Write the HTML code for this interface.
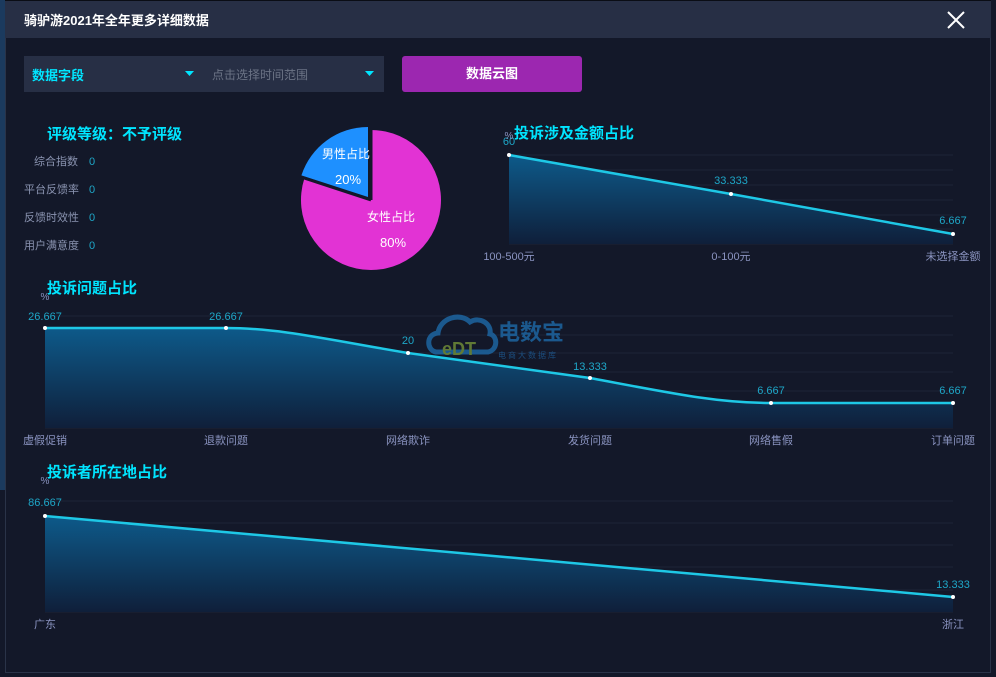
<!DOCTYPE html>
<html><head><meta charset="utf-8"><style>
html,body{margin:0;padding:0;width:996px;height:677px;overflow:hidden;background:#131829;font-family:"Liberation Sans","Noto Sans CJK SC",sans-serif}
.t{position:absolute;white-space:nowrap}
</style></head><body>
<div style="position:absolute;left:0;top:0;width:5px;height:490px;background:#1b3a5e"></div>
<div style="position:absolute;left:5px;top:0;width:986px;height:673px;border:1px solid #2a3348;box-sizing:border-box;background:#131829"></div>
<div style="position:absolute;left:5px;top:0;width:986px;height:38px;background:#272f45;border-top:1px solid #0a0d15;box-sizing:border-box"></div>
<div class="t" style="left:24px;top:10px;color:#fff;font-size:13px;font-weight:bold">骑驴游2021年全年更多详细数据</div>
<svg style="position:absolute;left:946px;top:10px" width="20" height="20"><path d="M2 2L18 18M18 2L2 18" stroke="#fff" stroke-width="2"/></svg>
<div style="position:absolute;left:24px;top:56px;width:360px;height:36px;background:#272f45"></div>
<div class="t" style="left:32px;top:65px;color:#00e5ff;font-size:13px;font-weight:bold">数据字段</div>
<div class="t" style="left:212px;top:66px;color:#6b7385;font-size:12px">点击选择时间范围</div>
<svg style="position:absolute;left:185px;top:71px" width="200" height="6"><path d="M0 0h9l-4.5 5z M180 0h9l-4.5 5z" fill="#00e5ff"/></svg>
<div style="position:absolute;left:402px;top:56px;width:180px;height:36px;background:#9c27b0;border-radius:3px;color:#fff;font-size:13px;font-weight:bold;text-align:center;line-height:36px">数据云图</div>
<div class="t" style="left:47px;top:123px;color:#00e5ff;font-size:15px;font-weight:bold">评级等级：不予评级</div>
<div class="t" style="left:24px;top:148px;font-size:11px;color:#8a93b0;line-height:28px;text-align:right;width:54px">综合指数<br>平台反馈率<br>反馈时效性<br>用户满意度</div>
<div class="t" style="left:89px;top:148px;font-size:11px;color:#1ea7c8;line-height:28px">0<br>0<br>0<br>0</div>
<svg style="position:absolute;left:0;top:0" width="996" height="677">
<defs><linearGradient id="g" x1="0" y1="0" x2="0" y2="1"><stop offset="0" stop-color="#0d5a8a"/><stop offset="1" stop-color="#0f1f3a"/></linearGradient></defs>
<path d="M371 200L371 130A70 70 0 1 1 304.4 178.4Z" fill="#e233d4"/>
<path d="M368 197L301.4 175.4A70 70 0 0 1 368 127Z" fill="#1e90ff"/>
<path d="M371 200L371 130M371 200L304 178" stroke="#131829" stroke-width="3"/>
<text x="346" y="158" fill="#fff" font-size="12" text-anchor="middle">男性占比</text>
<text x="348" y="184" fill="#fff" font-size="13" text-anchor="middle">20%</text>
<text x="391" y="221" fill="#fff" font-size="12" text-anchor="middle">女性占比</text>
<text x="393" y="247" fill="#fff" font-size="13" text-anchor="middle">80%</text>
<g stroke="#1c2438" stroke-width="1">
<path d="M509 155H953M509 170H953M509 185H953M509 200H953M509 215H953M509 229H953M509 244H953"/>
<path d="M45 316H953M45 335H953M45 353H953M45 372H953M45 391H953M45 409H953M45 428H953"/>
<path d="M45 501H953M45 523H953M45 545H953M45 567H953M45 590H953M45 612H953"/>
</g>
<path d="M509 155L731 194L953 234V244H509Z" fill="url(#g)"/>
<path d="M509 155L731 194L953 234" stroke="#1ec8e6" stroke-width="2.5" fill="none"/>
<path d="M45 328L226 328C280 328 330 340 408 353L590 378C680 395 720 403 771 403L953 403V428H45Z" fill="url(#g)"/>
<path d="M45 328L226 328C280 328 330 340 408 353L590 378C680 395 720 403 771 403L953 403" stroke="#1ec8e6" stroke-width="2.5" fill="none"/>
<path d="M45 516L953 597V612H45Z" fill="url(#g)"/>
<path d="M45 516L953 597" stroke="#1ec8e6" stroke-width="2.5" fill="none"/>
<g fill="#fff"><circle cx="509" cy="155" r="2"/><circle cx="731" cy="194" r="2"/><circle cx="953" cy="234" r="2"/>
<circle cx="45" cy="328" r="2"/><circle cx="226" cy="328" r="2"/><circle cx="408" cy="353" r="2"/><circle cx="590" cy="378" r="2"/><circle cx="771" cy="403" r="2"/><circle cx="953" cy="403" r="2"/>
<circle cx="45" cy="516" r="2"/><circle cx="953" cy="597" r="2"/></g>
<g fill="#1ea7c8" font-size="11" text-anchor="middle">
<text x="509" y="145">60</text><text x="731" y="184">33.333</text><text x="953" y="224">6.667</text>
<text x="45" y="320">26.667</text><text x="226" y="320">26.667</text><text x="408" y="344">20</text><text x="590" y="370">13.333</text><text x="771" y="394">6.667</text><text x="953" y="394">6.667</text>
<text x="45" y="506">86.667</text><text x="953" y="588">13.333</text></g>
<g fill="#8a93c0" font-size="11" text-anchor="middle">
<text x="509" y="260">100-500元</text><text x="731" y="260">0-100元</text><text x="953" y="260">未选择金额</text>
<text x="45" y="444">虚假促销</text><text x="226" y="444">退款问题</text><text x="408" y="444">网络欺诈</text><text x="590" y="444">发货问题</text><text x="771" y="444">网络售假</text><text x="953" y="444">订单问题</text>
<text x="45" y="628">广东</text><text x="953" y="628">浙江</text>
<text x="509" y="139" font-size="10">%</text><text x="45" y="300" font-size="10">%</text><text x="45" y="484" font-size="10">%</text></g>
<g fill="#00e5ff" font-size="15" font-weight="bold"><text x="514" y="138">投诉涉及金额占比</text><text x="47" y="293">投诉问题占比</text><text x="47" y="477">投诉者所在地占比</text></g>
<g opacity="0.75"><path d="M436 352C426 350 426 334 438 333C440 318 460 312 470 322C480 316 492 324 490 334C498 336 498 350 488 352Z" fill="none" stroke="#1e6fb0" stroke-width="5"/>
<text x="442" y="355" fill="#7a9a3a" font-size="18" font-weight="bold">eDT</text>
<text x="498" y="340" fill="#1e6fb0" font-size="22" font-weight="bold">电数宝</text>
<text x="498" y="358" fill="#1e5f9a" font-size="8" letter-spacing="2">电商大数据库</text></g>
</svg>
</body></html>
